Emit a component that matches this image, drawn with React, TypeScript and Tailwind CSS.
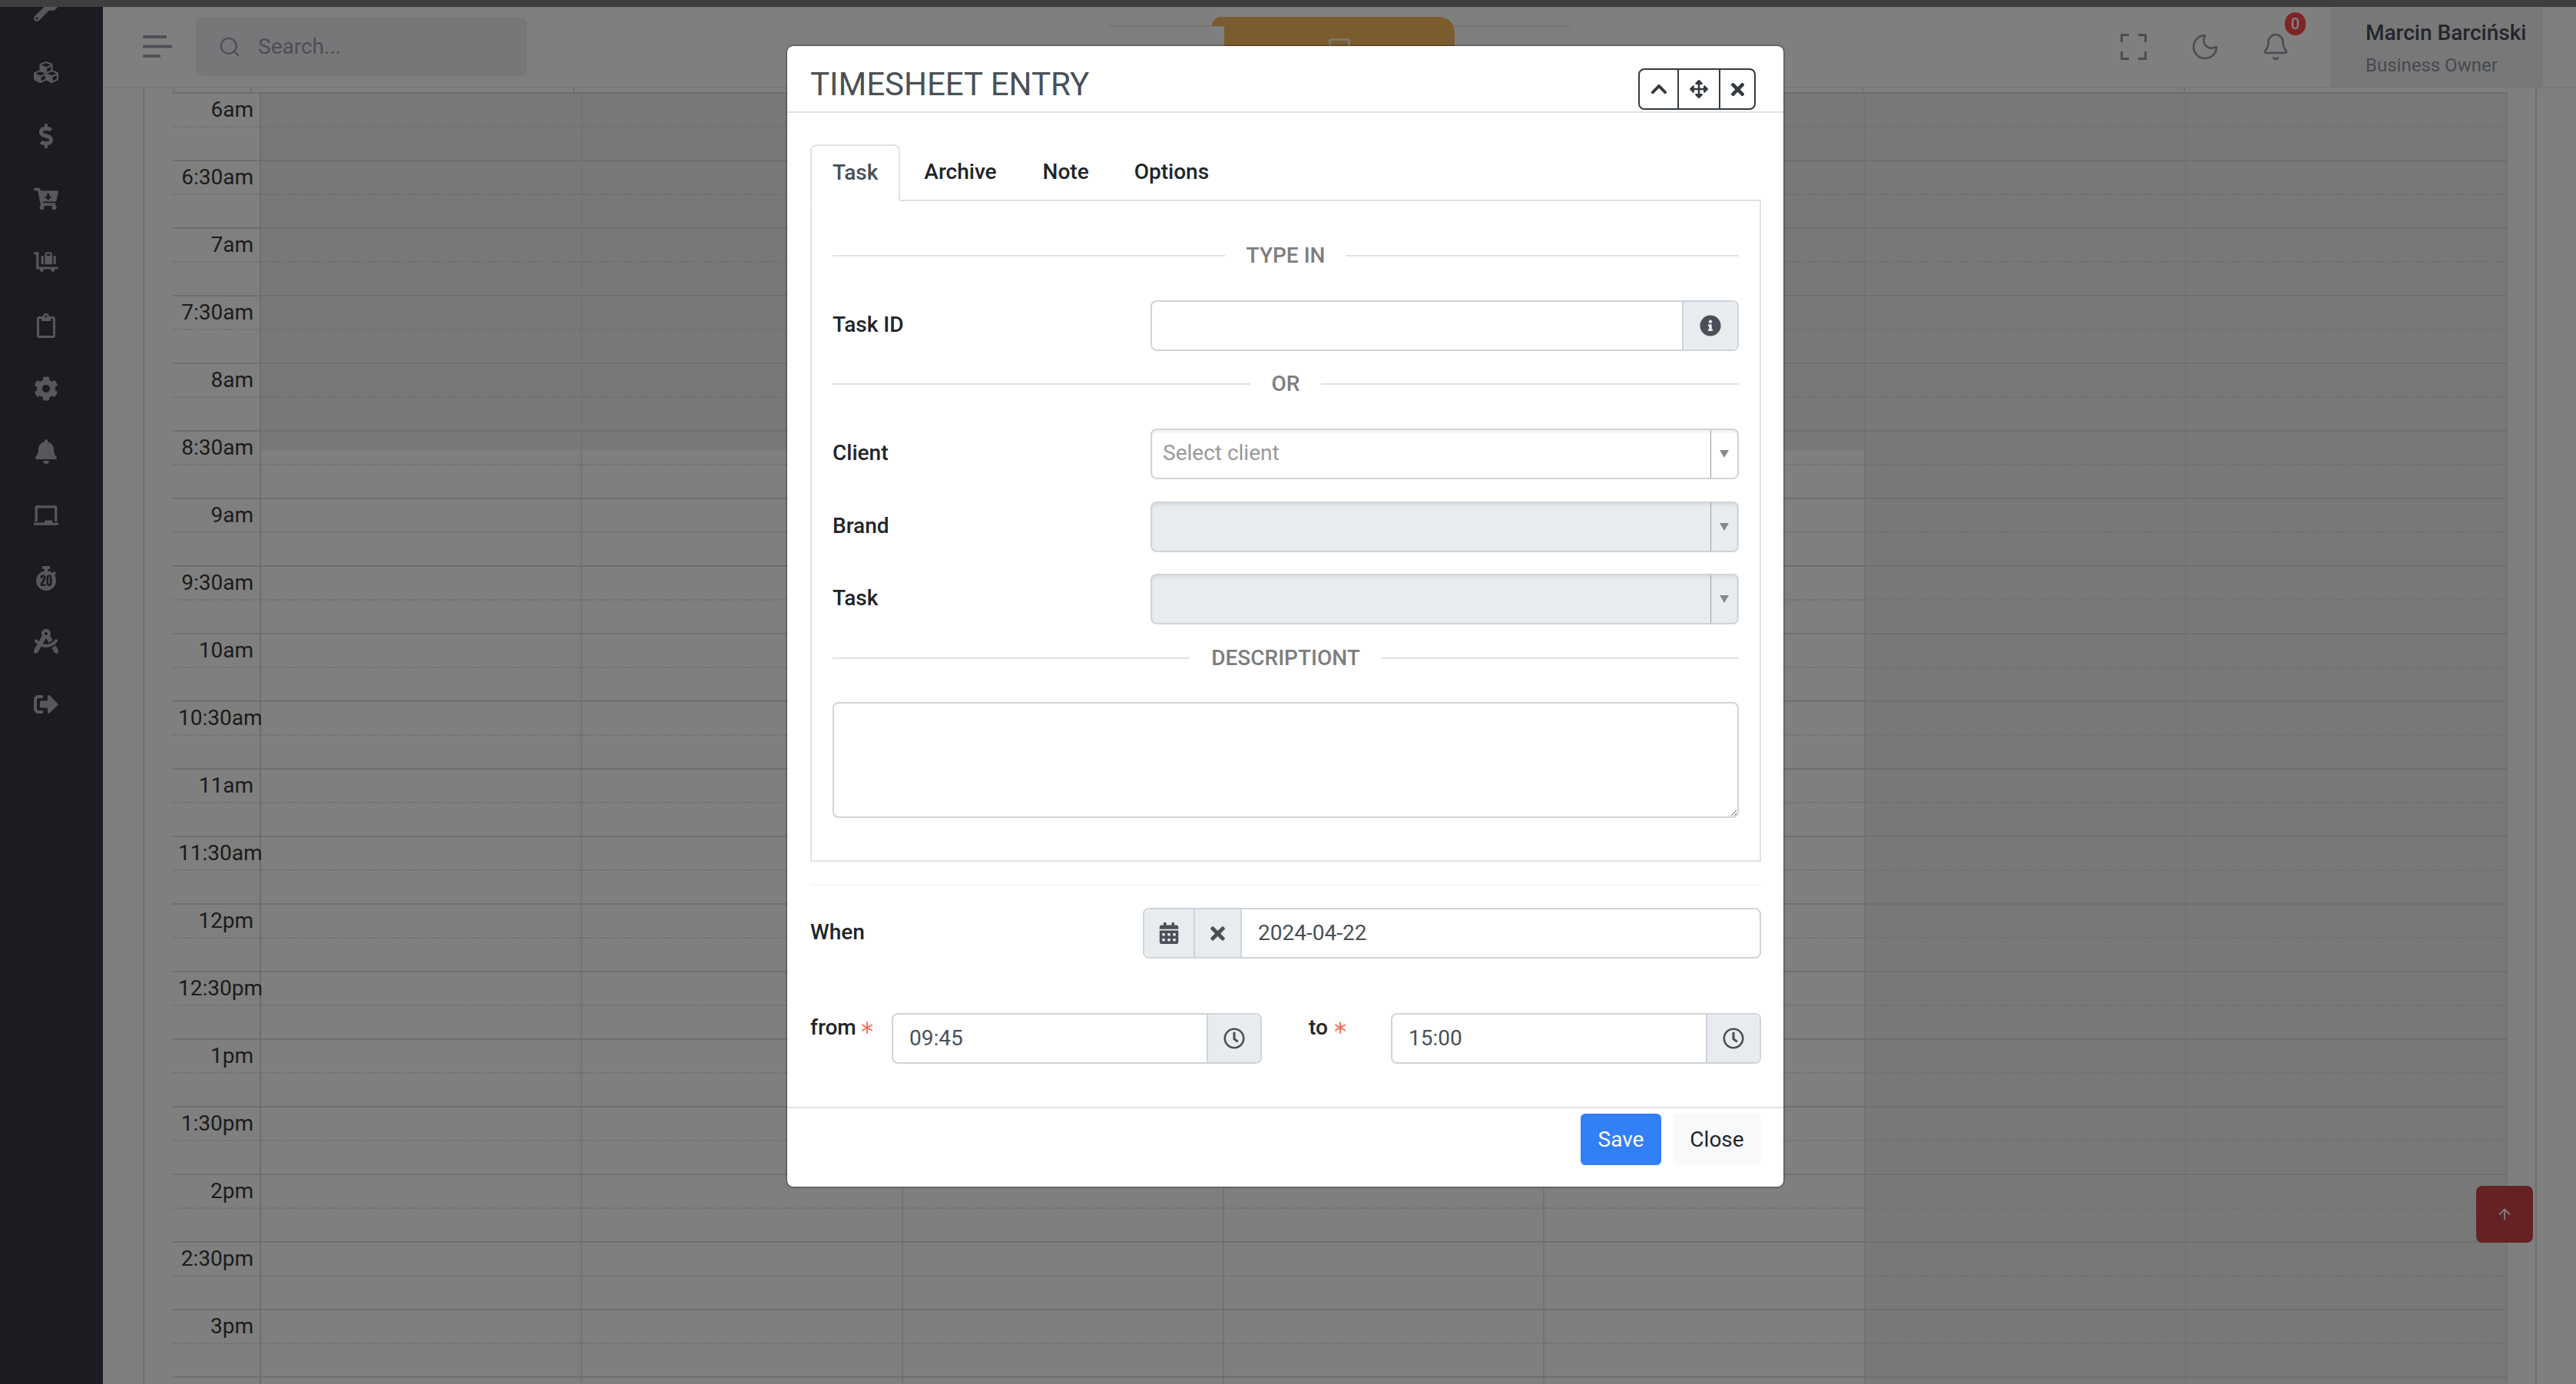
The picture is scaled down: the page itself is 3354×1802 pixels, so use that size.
import type { ReactNode } from 'react'
import { Asterisk, ArrowUp, Bell, Moon, Search } from 'lucide-react'
import {
  FaArrowsAlt,
  FaBell,
  FaCalendarAlt,
  FaCartArrowDown,
  FaChalkboard,
  FaChevronUp,
  FaCog,
  FaCubes,
  FaDollarSign,
  FaDraftingCompass,
  FaInfoCircle,
  FaLuggageCart,
  FaRegClipboard,
  FaRegClock,
  FaSignOutAlt,
  FaStopwatch20,
  FaTimes,
  FaWrench,
} from 'react-icons/fa'

const sidebarIcons = [
  FaWrench,
  FaCubes,
  FaDollarSign,
  FaCartArrowDown,
  FaLuggageCart,
  FaRegClipboard,
  FaCog,
  FaBell,
  FaChalkboard,
  FaStopwatch20,
  FaDraftingCompass,
  FaSignOutAlt,
]

const times = [
  '6am', '6:30am', '7am', '7:30am', '8am', '8:30am', '9am', '9:30am', '10am', '10:30am',
  '11am', '11:30am', '12pm', '12:30pm', '1pm', '1:30pm', '2pm', '2:30pm', '3pm', '3:30pm',
]

const days = [0, 1, 2, 3, 4, 5, 6]

function Sidebar() {
  return (
    <aside className="flex w-[134px] shrink-0 flex-col items-center overflow-hidden bg-[#363842] pr-[14px] text-[#b0b0b8]">
      <div className="-mt-[38px] flex flex-col items-center">
        {sidebarIcons.map((Icon, index) => (
          <div key={index} className="flex h-[82.3px] items-center justify-center">
            <Icon size={32} />
          </div>
        ))}
      </div>
    </aside>
  )
}

function Header() {
  return (
    <header className="relative flex h-[106px] shrink-0 items-center border-b-2 border-[#eeeeee] bg-white pl-[52px]">
      <svg width="38" height="30" viewBox="0 0 38 30" className="text-[#9c9eae]" fill="currentColor">
        <rect x="0" y="0" width="31" height="4" rx="1" />
        <rect x="0" y="12.5" width="38" height="4" rx="1" />
        <rect x="0" y="25" width="23" height="4" rx="1" />
      </svg>
      <div className="ml-[31px] flex h-[76px] w-[431px] items-center gap-[22px] rounded-lg bg-[#eeeff2] pl-[29px] text-[28px] text-[#9c9ea8]">
        <Search size={30} strokeWidth={1.8} />
        <span>Search...</span>
      </div>

      <div className="absolute left-[1310px] top-[24px] h-[2px] w-[600px] bg-[#e6e6e6]" />
      <div className="absolute left-[1444px] top-[13px] h-[12px] w-[20px] rounded-tl-2xl bg-[#f6b85c]" />
      <div className="absolute left-[1460px] top-[13px] flex h-[70px] w-[300px] justify-center rounded-tr-[20px] bg-[#f6b85c] pt-[28px]">
        <div className="h-[28px] w-[28px] rounded border-[3px] border-white/70" />
      </div>

      <div className="ml-auto flex items-center text-[#989aa6]">
        <svg width="34" height="34" viewBox="0 0 34 34" fill="none" stroke="currentColor" strokeWidth="3">
          <path d="M1.5 11V1.5H11M23 1.5H32.5V11M1.5 23V32.5H11M23 32.5H32.5V23" />
        </svg>
        <Moon size={40} strokeWidth={1.6} className="ml-[56px]" />
        <div className="relative ml-[53px]">
          <Bell size={38} strokeWidth={1.7} />
          <span className="absolute -top-[26px] left-[31px] flex h-[30px] w-[27px] items-center justify-center rounded-full bg-[#ff484c] text-[20px] font-medium text-white">
            0
          </span>
        </div>
        <div className="ml-[53px] flex h-[104px] w-[276px] flex-col bg-[#f0f1f3] pl-[45px] pt-[14px]">
          <span className="text-[28px] font-medium leading-[40px] text-[#4a4c54]">Marcin Barciński</span>
          <span className="mt-[5px] text-[24px] leading-[34px] text-[#8f919e]">Business Owner</span>
        </div>
      </div>
      <div className="w-[43px]" />
    </header>
  )
}

function DayCell({ row, day }: { row: number; day: number }) {
  const fullShade = day >= 5 || row < 5
  const partShade = day < 5 && row === 5

  return (
    <div className={`relative h-full flex-1 border-r-2 border-[#e6e6e6] ${fullShade ? 'bg-[#f0f0f0]' : ''}`}>
      {partShade ? <div className="absolute inset-x-0 top-0 h-[24px] bg-[#f0f0f0]" /> : null}
      <div className="relative h-[44px] border-b-2 border-dotted border-[#dddddd]" />
    </div>
  )
}

function Calendar() {
  return (
    <div className="mx-[36px] flex-1 overflow-hidden">
      <div className="flex h-[7px] border-b-2 border-[#dddddd] pl-[2px]">
        <div className="w-[100px] border-l-2 border-[#dddddd]" />
        {days.map((day) => (
          <div key={day} className="w-[419.5px] border-l-2 border-[#dddddd]" />
        ))}
      </div>
      {times.map((time, row) => (
        <div key={time} className="flex h-[88px] border-b-2 border-[#dddddd]">
          <div className="h-full w-[116px] shrink-0 border-r-2 border-[#dddddd]">
            <div className="h-[44px] whitespace-nowrap border-b-2 border-dotted border-[#dddddd] px-[8px] text-right text-[28px] leading-[42px] text-[#383838]">
              {time}
            </div>
          </div>
          {days.map((day) => (
            <DayCell key={day} row={row} day={day} />
          ))}
        </div>
      ))}
    </div>
  )
}

function Divider({ label }: { label: string }) {
  return (
    <div className="flex h-[34px] items-center gap-[28px]">
      <div className="h-[2px] flex-1 bg-[#dee2e6]" />
      <span className="text-[28px] font-medium text-[#7d7d7d]">{label}</span>
      <div className="h-[2px] flex-1 bg-[#dee2e6]" />
    </div>
  )
}

function Addon({ children, className }: { children: ReactNode; className: string }) {
  return (
    <div className={`flex shrink-0 items-center justify-center border-[#ced4da] bg-[#e9ecef] text-[#495057] ${className}`}>
      {children}
    </div>
  )
}

function SelectBox({ placeholder, disabled }: { placeholder?: string; disabled?: boolean }) {
  return (
    <div
      className={`flex h-[66px] items-stretch rounded-lg border-2 border-[#ced4da] shadow-[inset_0_3px_3px_rgba(0,0,0,0.06)] ${
        disabled ? 'bg-[#e9ecef]' : 'bg-white'
      }`}
    >
      <div className="flex-1 pl-[14px] text-[28px] leading-[60px] text-[#999999]">{placeholder}</div>
      <div className="flex w-[35px] items-center justify-center border-l border-[#999999]">
        <svg width="12" height="12" viewBox="0 0 12 12" fill="#888888">
          <polygon points="0,1 12,1 6,11" />
        </svg>
      </div>
    </div>
  )
}

function TimeField({ value }: { value: string }) {
  return (
    <div className="flex h-[66px] w-[482px] rounded-lg border-2 border-[#ced4da]">
      <input
        className="min-w-0 flex-1 rounded-l-lg bg-white px-[21px] text-[28px] text-[#495057] outline-none"
        defaultValue={value}
      />
      <Addon className="w-[70px] rounded-r-lg border-l-2">
        <FaRegClock size={28} />
      </Addon>
    </div>
  )
}

function FormRow({ label, children }: { label: string; children: ReactNode }) {
  return (
    <div className="grid grid-cols-[414px_1fr] items-center">
      <label className="pb-[3px] text-[28px] font-medium text-[#212529]">{label}</label>
      {children}
    </div>
  )
}

function TimesheetModal() {
  return (
    <div className="absolute left-[1025px] top-[60px] flex h-[1485px] w-[1297px] flex-col rounded-lg bg-white font-[Roboto,sans-serif] ring-2 ring-black/20">
      <div className="flex h-[87px] shrink-0 items-end justify-between border-b-2 border-[#dee2e6] pb-[2px] pl-[30px] pr-[36px]">
        <h2 className="pb-[3px] text-[42px] font-normal leading-[60px] text-[#495057]">TIMESHEET ENTRY</h2>
        <div className="flex h-[54px] w-[153px] rounded-lg border-2 border-[#343a40] text-[#343a40]">
          <div className="flex w-[51px] items-center justify-center border-r-2 border-[#343a40]">
            <FaChevronUp size={24} />
          </div>
          <div className="flex w-[54px] items-center justify-center border-r-2 border-[#343a40]">
            <FaArrowsAlt size={24} />
          </div>
          <div className="flex flex-1 items-center justify-center">
            <FaTimes size={25} />
          </div>
        </div>
      </div>

      <div className="flex-1 pl-[30px] pr-[29px] pt-[41px]">
        <div className="flex h-[72px] text-[28px] font-medium text-[#212529]">
          <div className="relative z-10 flex h-[74px] items-center rounded-t-lg border-2 border-[#dee2e6] border-b-white px-[27px] text-[#495057]">
            Task
          </div>
          <div className="flex h-[72px] items-center pl-[31px] pr-[30px]">Archive</div>
          <div className="flex h-[72px] items-center px-[30px]">Note</div>
          <div className="flex h-[72px] items-center pl-[29px] pr-[30px]">Options</div>
        </div>

        <div className="h-[862px] border-2 border-[#dee2e6] px-[27px] pt-[54px]">
          <Divider label="TYPE IN" />
          <div className="mt-[41px]">
            <FormRow label="Task ID">
              <div className="flex h-[66px] rounded-lg border-2 border-[#ced4da]">
                <input className="min-w-0 flex-1 rounded-l-lg bg-white outline-none" />
                <Addon className="w-[72px] rounded-r-lg border-l-2">
                  <FaInfoCircle size={28} />
                </Addon>
              </div>
            </FormRow>
          </div>
          <div className="mt-[26px]">
            <Divider label="OR" />
          </div>
          <div className="mt-[41px]">
            <FormRow label="Client">
              <SelectBox placeholder="Select client" />
            </FormRow>
          </div>
          <div className="mt-[29px]">
            <FormRow label="Brand">
              <SelectBox disabled />
            </FormRow>
          </div>
          <div className="mt-[28px]">
            <FormRow label="Task">
              <SelectBox disabled />
            </FormRow>
          </div>
          <div className="mt-[27px]">
            <Divider label="DESCRIPTIONT" />
          </div>
          <textarea className="mt-[40px] block h-[151px] w-full rounded-lg border-2 border-[#ced4da] bg-white outline-none" />
        </div>

        <div className="mt-[29px] h-[2px] bg-[#f5f5f5]" />

        <div className="mt-[29px] flex items-center">
          <label className="w-[433px] pb-[3px] text-[28px] font-medium text-[#212529]">When</label>
          <div className="flex h-[66px] flex-1 rounded-lg border-2 border-[#ced4da]">
            <Addon className="w-[66px] rounded-l-lg border-r-2">
              <FaCalendarAlt size={28} />
            </Addon>
            <Addon className="w-[61px] border-r-2">
              <FaTimes size={27} />
            </Addon>
            <input
              className="min-w-0 flex-1 rounded-r-lg bg-white px-[21px] text-[28px] text-[#495057] outline-none"
              defaultValue="2024-04-22"
            />
          </div>
        </div>

        <div className="mt-[71px] flex items-start">
          <label className="flex w-[106px] items-center text-[28px] font-medium leading-[38px] text-[#212529]">
            from
            <Asterisk size={28} strokeWidth={1.6} className="text-[#f26a4f]" />
          </label>
          <TimeField value="09:45" />
          <label className="ml-[61px] flex w-[107px] items-center text-[28px] font-medium leading-[38px] text-[#212529]">
            to
            <Asterisk size={28} strokeWidth={1.6} className="ml-[2px] text-[#f26a4f]" />
          </label>
          <TimeField value="15:00" />
        </div>
      </div>

      <div className="flex h-[104px] shrink-0 items-start justify-end gap-[15px] border-t-2 border-[#dee2e6] pr-[29px] pt-[7px] text-[28px]">
        <button className="h-[67px] w-[105px] rounded-md bg-[#327ff8] text-white">Save</button>
        <button className="h-[67px] w-[115px] rounded-md bg-[#f8f9fa] text-[#212529]">Close</button>
      </div>
    </div>
  )
}

export default function App() {
  return (
    <div className="relative flex h-[1802px] w-[3354px] flex-col overflow-hidden bg-white font-[Roboto,sans-serif]">
      <div className="h-[9px] shrink-0 bg-[#7c7c7c]" />
      <div className="flex min-h-0 flex-1">
        <Sidebar />
        <main className="flex min-w-0 flex-1 flex-col">
          <Header />
          <div className="ml-[52px] mr-[51px] flex min-h-0 flex-1 border-x-2 border-[#dddddd]">
            <Calendar />
          </div>
        </main>
      </div>

      <button className="absolute bottom-[184px] right-[56px] flex h-[74px] w-[74px] items-center justify-center rounded-lg bg-[#cc4248] text-white">
        <ArrowUp size={22} strokeWidth={2} />
      </button>

      <div className="absolute inset-0 bg-black/50" />
      <TimesheetModal />
    </div>
  )
}
